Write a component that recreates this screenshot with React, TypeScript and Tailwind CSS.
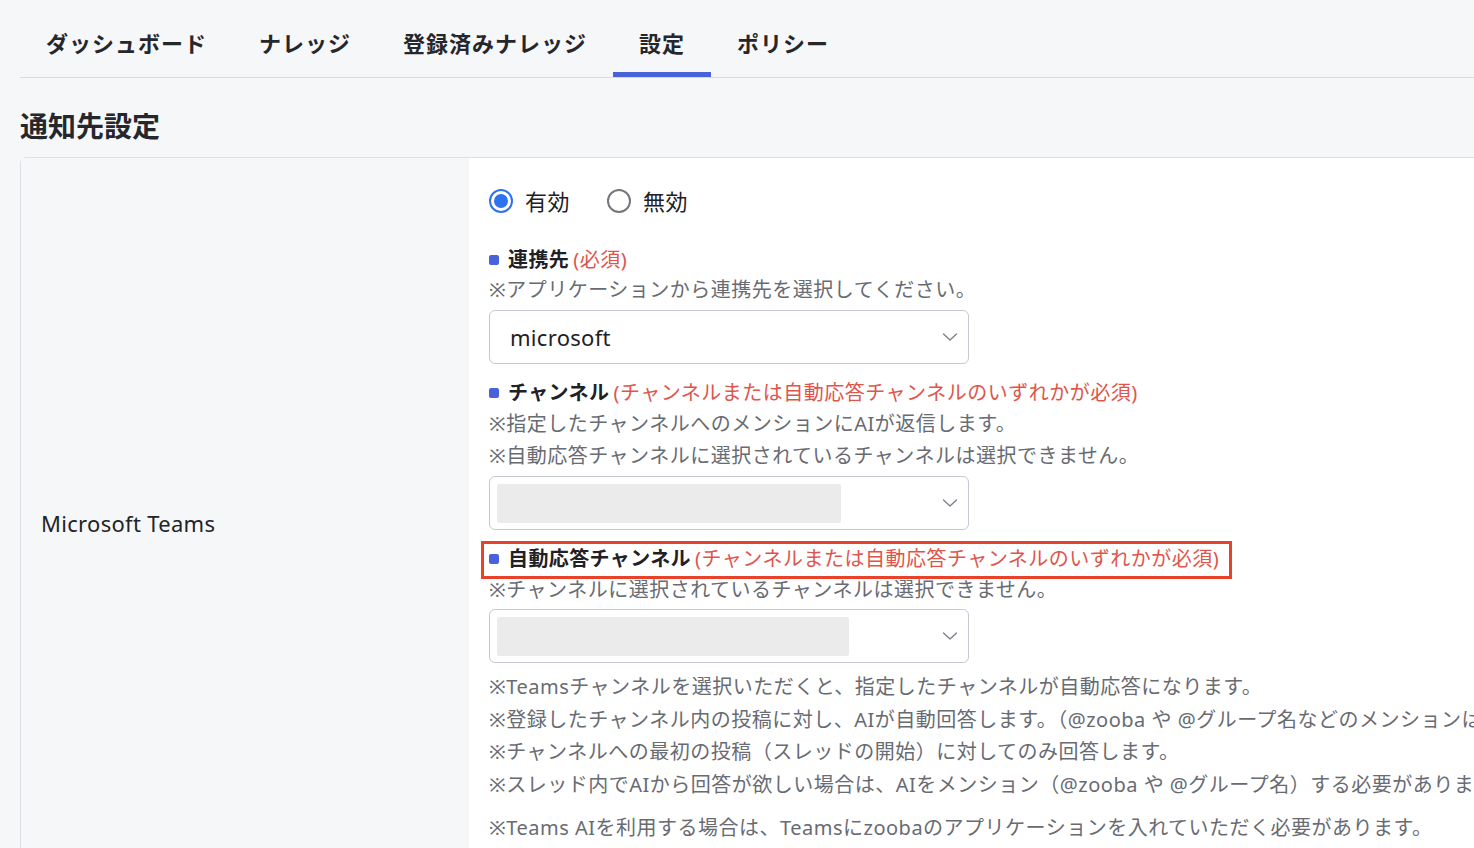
import React from "react";

const jp = { fontFamily: '"Noto Sans", "Noto Sans CJK JP", sans-serif' };

const tabs = ["ダッシュボード", "ナレッジ", "登録済みナレッジ", "設定", "ポリシー"];

function Chevron() {
  return (
    <svg width="16" height="10" viewBox="0 0 16 10" fill="none" className="shrink-0">
      <path d="M1.5 2 L8 8 L14.5 2" stroke="#7b7d86" strokeWidth="1.3" strokeLinecap="round" strokeLinejoin="round" />
    </svg>
  );
}

function Radio({ checked, label }: { checked: boolean; label: string }) {
  return (
    <label className="flex items-center gap-[12px]">
      {checked ? (
        <span className="w-[24px] h-[24px] rounded-full border-[2px] border-[#2f72ee] flex items-center justify-center">
          <span className="w-[14px] h-[14px] rounded-full bg-[#2f72ee]" />
        </span>
      ) : (
        <span className="w-[24px] h-[24px] rounded-full border-[2px] border-[#76777c]" />
      )}
      <span className="text-[22px] leading-[32px] tracking-[0.5px] text-[#1e2024]">{label}</span>
    </label>
  );
}

function Label({ title, note }: { title: string; note?: string }) {
  return (
    <div className="flex items-center h-[30px] leading-[30px] whitespace-nowrap">
      <span className="w-[10px] h-[10px] rounded-[2px] bg-[#4a61dc] mr-[9px] shrink-0" />
      <span className="text-[20px] font-bold text-[#1f2126] tracking-[0.4px]">{title}</span>
      {note && <span className="text-[20px] text-[#e0554b] ml-[4px] tracking-[0.5px]">{note}</span>}
    </div>
  );
}

function Select({ children }: { children?: React.ReactNode }) {
  return (
    <div className="w-[480px] h-[54px] rounded-[6px] border border-[#c7c8d2] bg-white flex items-center pl-[7px] pr-[10px]">
      <div className="flex-1 flex items-center">{children}</div>
      <Chevron />
    </div>
  );
}

export default function App() {
  return (
    <div className="w-[1474px] h-[848px] overflow-hidden bg-[#f6f7f9] pl-[20px]" style={jp}>
      {/* top navigation */}
      <nav className="flex border-b border-[#d9dbe1]">
        {tabs.map((t) => (
          <div
            key={t}
            className={
              "px-[26px] pt-[27px] pb-[13px] text-[22px] leading-[32px] font-bold tracking-[1px] text-[#25272c] border-b-[5px] " +
              (t === "設定" ? "border-[#4a62d9]" : "border-transparent")
            }
          >
            {t}
          </div>
        ))}
      </nav>

      <h1 className="mt-[28px] mb-[11px] text-[28px] leading-[40px] font-bold text-[#25272c]">通知先設定</h1>

      {/* settings card */}
      <div className="flex border-t border-l border-b border-[#dce0e7] rounded-tl-[6px]">
        <div className="w-[448px] shrink-0 bg-[#f6f7f9] flex items-center pl-[20px]">
          <span className="text-[22px] tracking-[0.3px] text-[#222428]">Microsoft Teams</span>
        </div>

        <div className="flex-1 bg-white pl-[20px] pt-[27px] pb-[12px] text-[20px] tracking-[0.5px] text-[#686b72] whitespace-nowrap">
          <div className="flex items-center gap-[37px] h-[32px]">
            <Radio checked label="有効" />
            <Radio checked={false} label="無効" />
          </div>

          <div className="mt-[28px]">
            <Label title="連携先" note="(必須)" />
            <p className="leading-[30px]">※アプリケーションから連携先を選択してください。</p>
          </div>
          <div className="mt-[5px]">
            <Select>
              <span className="pl-[13px] text-[22px] tracking-[0.3px] text-[#1e2024]">microsoft</span>
            </Select>
          </div>

          <div className="mt-[14px]">
            <Label title="チャンネル" note="(チャンネルまたは自動応答チャンネルのいずれかが必須)" />
            <p className="leading-[32px]">※指定したチャンネルへのメンションにAIが返信します。</p>
            <p className="leading-[32px]">※自動応答チャンネルに選択されているチャンネルは選択できません。</p>
          </div>
          <div className="mt-[4px]">
            <Select>
              <div className="w-[344px] h-[39px] rounded-[2px] bg-[#ebebeb]" />
            </Select>
          </div>

          <div className="mt-[14px] relative">
            <Label title="自動応答チャンネル" note="(チャンネルまたは自動応答チャンネルのいずれかが必須)" />
            <div className="absolute left-[-8px] top-[-3px] w-[751px] h-[38px] border-[3px] border-[#e8432a] pointer-events-none" />
            <p className="mt-[1px] leading-[30px]">※チャンネルに選択されているチャンネルは選択できません。</p>
          </div>
          <div className="mt-[4px]">
            <Select>
              <div className="w-[352px] h-[39px] rounded-[2px] bg-[#ebebeb]" />
            </Select>
          </div>

          <div className="mt-[8px] leading-[32.5px]">
            <p>※Teamsチャンネルを選択いただくと、指定したチャンネルが自動応答になります。</p>
            <p>※登録したチャンネル内の投稿に対し、AIが自動回答します。（@zooba や @グループ名などのメンションは不要です）</p>
            <p>※チャンネルへの最初の投稿（スレッドの開始）に対してのみ回答します。</p>
            <p>※スレッド内でAIから回答が欲しい場合は、AIをメンション（@zooba や @グループ名）する必要があります。</p>
          </div>
          <div className="mt-[11px] leading-[32px]">
            <p>※Teams AIを利用する場合は、Teamsにzoobaのアプリケーションを入れていただく必要があります。</p>
            <p>※アプリケーションの追加方法は、管理者にお問い合わせください。</p>
          </div>
        </div>
      </div>
    </div>
  );
}
